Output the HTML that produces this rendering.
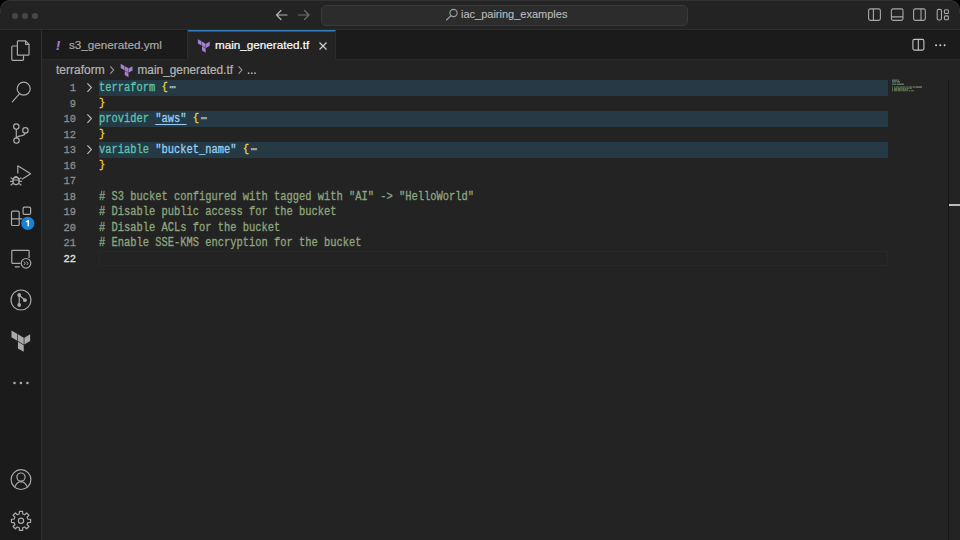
<!DOCTYPE html>
<html><head><meta charset="utf-8">
<style>
html,body{margin:0;padding:0;width:960px;height:540px;overflow:hidden;background:#000;}
body{position:relative;font-family:"Liberation Sans",sans-serif;}
.abs{position:absolute;}
#win{position:absolute;left:0;top:0;width:960px;height:540px;background:#232323;border-radius:10px 10px 0 0;overflow:hidden;}
#topb{position:absolute;left:0;top:0;width:958px;height:12px;border:1px solid #333333;border-bottom:none;border-radius:10px 10px 0 0;z-index:5;}
#title{position:absolute;left:0;top:0;width:960px;height:29px;background:#232323;border-bottom:1px solid #2e2e2e;}
#act{position:absolute;left:0;top:30px;width:41px;height:510px;background:#1b1b1b;border-right:1px solid #303030;}
#tabs{position:absolute;left:42px;top:30px;width:918px;height:29px;background:#1b1b1b;border-bottom:1px solid #2a2a2a;box-shadow:inset 0 1px 0 #171717;}
.tab{position:absolute;top:0;height:29px;font-size:11.7px;color:#a8a8a8;-webkit-text-stroke:0.2px currentColor;}
#code{position:absolute;left:42px;top:80px;width:918px;font-family:"Liberation Mono",monospace;font-size:10.42px;}
.ln{position:absolute;left:-66px;width:100px;text-align:right;color:#8c8c8c;font-size:11.6px;transform:translateY(0px) scaleX(0.898);transform-origin:100% 0;-webkit-text-stroke:0.3px currentColor;}
.tx{position:absolute;left:57px;white-space:pre;}
.hl{position:absolute;left:57px;width:789px;height:15.5px;background:#263a46;}
svg{position:absolute;overflow:visible;}
.ln,.tx{line-height:15.5px;height:15.5px;}
.tx{font-size:12px;transform:translateY(1px) scaleX(0.868);transform-origin:0 0;-webkit-text-stroke:0.3px currentColor;}
.k{color:#5dc3af;}
.s{color:#95d0f5;}
.u{text-decoration:underline;text-underline-offset:2px;}
.b{color:#f5d33a;display:inline-block;transform:translateY(-0.9px) scaleY(0.86);transform-origin:50% 62%;}
.c{color:#8ea67e;}
.el{color:#b8b8b8;margin-left:2px;}
.act{color:#e6e6e6;}
.cur{position:absolute;left:57px;width:787px;height:13px;border:1px solid #282828;}
</style></head><body>
<div id="win">
<div id="topb"></div>
  <div id="title">
    <div class="abs" style="left:12.2px;top:12.5px;width:6.2px;height:6.2px;border-radius:50%;background:#484848"></div>
    <div class="abs" style="left:22.2px;top:12.5px;width:6.2px;height:6.2px;border-radius:50%;background:#484848"></div>
    <div class="abs" style="left:32.2px;top:12.5px;width:6.2px;height:6.2px;border-radius:50%;background:#484848"></div>
    <svg style="left:0;top:0" width="960" height="30">
      <g fill="none" stroke="#b4b4b4" stroke-width="1.2" stroke-linecap="round" stroke-linejoin="round">
        <path d="M287 15H276.5M281 10.5L276.5 15L281 19.5"/>
      </g>
      <g fill="none" stroke="#707070" stroke-width="1.2" stroke-linecap="round" stroke-linejoin="round">
        <path d="M298.5 15H309M304.5 10.5L309 15L304.5 19.5"/>
      </g>
    </svg>
    <div class="abs" style="left:321px;top:4.5px;width:365px;height:19px;border-radius:5px;background:#2c2c2c;border:1px solid #3a3a3a;"></div>
    <svg style="left:0;top:0" width="960" height="30">
      <g fill="none" stroke="#a0a0a0" stroke-width="1.1" stroke-linecap="round">
        <circle cx="453.5" cy="13" r="3.6"/><path d="M451 15.6L446.5 20"/>
      </g>
    </svg>
    <div class="abs" style="left:461px;top:8px;font-size:11px;color:#b8b8b8;-webkit-text-stroke:0.15px currentColor;">iac_pairing_examples</div>
    <svg style="left:0;top:0" width="960" height="30">
      <g fill="none" stroke="#a8a8a8" stroke-width="1.1">
        <rect x="868.6" y="8.9" width="11.8" height="11.5" rx="1.8"/><path d="M873.4 9V20.4"/>
        <rect x="891.4" y="8.9" width="11.6" height="11.5" rx="1.8"/><path d="M891.5 16.9H903"/>
        <rect x="913.6" y="8.9" width="11.7" height="11.5" rx="1.8"/><path d="M921 9V20.4"/>
        <rect x="937.2" y="9.4" width="4.3" height="10.6" rx="1.5"/>
        <rect x="944.4" y="9.7" width="4" height="3.8" rx="1"/>
        <rect x="944.4" y="15.9" width="4" height="3.8" rx="1"/>
      </g>
    </svg>
  </div>

  <div id="act">
    <svg style="left:0;top:-30px" width="41" height="540">
      <g fill="none" stroke="#a9a9a9" stroke-width="1.2" stroke-linecap="round" stroke-linejoin="round">
        <!-- explorer -->
        <path d="M16.5 46H12.6Q11.8 46 11.8 47V59.6Q11.8 60.4 12.6 60.4H22.6Q23.5 60.4 23.5 59.6V55.7"/>
        <path d="M17.4 55.1V41.7Q17.4 40.9 18.2 40.9H25.6L29 44.3V54.2Q29 55.1 28.2 55.1H18.2Q17.4 55.1 17.4 54.2Z"/>
        <path d="M25.6 41V44.3H28.9"/>
        <!-- search -->
        <circle cx="23.7" cy="88.7" r="6.5"/><path d="M19.2 94.2L12.3 101.8"/>
        <!-- scm -->
        <circle cx="16.3" cy="126.6" r="2.7"/><circle cx="25.4" cy="130.4" r="2.7"/><circle cx="16.5" cy="140.6" r="2.7"/>
        <path d="M16.3 129.3V137.9M25.2 133.1Q24.5 135.6 21 135.8Q17 136.2 16.4 138.2"/>
        <!-- debug -->
        <path d="M17.8 173V165.8L30.6 173.8L22.3 179"/>
        <ellipse cx="16" cy="181" rx="3.1" ry="3.6"/><path d="M13 180H19M11 178L12.9 179M21 178L19.1 179M10.6 181.4H12.9M21.4 181.4H19.1M11 185L13 183.4M21 185L19 183.4M14 177.8Q16 175.6 18 177.8"/>
        <!-- extensions -->
        <rect x="11.5" y="211.1" width="7.7" height="14.4" rx="1.3"/><path d="M11.5 218.9H22"/>
        <rect x="23.1" y="207.1" width="7.5" height="7.3" rx="1.2"/>
        <!-- remote -->
        <path d="M20 263.4H12.4Q11.8 263.4 11.8 262.6V251Q11.8 250.3 12.4 250.3H28.4Q29.1 250.3 29.1 251V257.5"/>
        <path d="M15.2 266.8H19.3"/>
        <circle cx="26" cy="263.3" r="4.8"/>
        <!-- gitlens -->
        <circle cx="21" cy="300" r="10"/>
        <path d="M19.2 295V305M19.2 295L24.9 300.2"/>
        <!-- account -->
        <circle cx="21" cy="479.6" r="9.9"/><circle cx="21" cy="477.1" r="4.1"/>
        <path d="M14.8 486.8Q17 481.8 21 481.6Q25 481.8 27.3 486.8"/>
        <!-- gear -->
        <circle cx="21" cy="520.8" r="2.6"/><path d="M19.28 513.96L19.40 511.28L22.60 511.28L22.72 513.96L24.66 514.76L26.63 512.95L28.90 515.22L27.09 517.19L27.89 519.13L30.57 519.25L30.57 522.45L27.89 522.57L27.09 524.51L28.90 526.48L26.63 528.75L24.66 526.94L22.72 527.74L22.60 530.42L19.40 530.42L19.28 527.74L17.34 526.94L15.37 528.75L13.10 526.48L14.91 524.51L14.11 522.57L11.43 522.45L11.43 519.25L14.11 519.13L14.91 517.19L13.10 515.22L15.37 512.95L17.34 514.76Z"/>
      </g>
      <g fill="#a9a9a9">
        <path d="M23.9 261.6L25.3 263.1L24 265M26.6 261.6L28 263.4L26.8 265" stroke="#a9a9a9" stroke-width="1" fill="none"/>
        <circle cx="19.2" cy="295" r="1.9"/><circle cx="19.2" cy="305" r="1.9"/><circle cx="24.9" cy="300.2" r="1.9"/>
        <g transform="translate(10.2,330.6) scale(0.885)"><path d="M1.44 0v7.575l6.561 3.79V3.787zm21.12 4.227l-6.561 3.791v7.574l6.56-3.787zM8.72 4.23v7.575l6.561 3.787V8.018zm0 8.405v7.575L15.28 24v-7.578z"/></g>
        <circle cx="14.5" cy="383" r="1.3"/><circle cx="20.9" cy="383" r="1.3"/><circle cx="27.4" cy="383" r="1.3"/>
      </g>
      <circle cx="27.8" cy="223.4" r="6.6" fill="#1683d8"/>
      <path d="M28.3 226.3V220.6L26.2 222" stroke="#fff" stroke-width="1.5" fill="none" stroke-linejoin="round"/>
    </svg>
  </div>

  <div id="tabs">
    <div class="tab" style="left:0;width:145px;background:#1b1b1b;border-right:1px solid #2c2c2c;box-shadow:inset 0 1px 0 #171717;">
      <div class="abs" style="left:14px;top:7.5px;font-size:13px;font-weight:bold;transform:skewX(-10deg);color:#a37fd2;">!</div>
      <div class="abs" style="left:27px;top:7.5px;">s3_generated.yml</div>
    </div>
    <div class="tab" style="left:146px;width:147px;background:#232323;border-top:1px solid #3479bb;height:29px;border-right:1px solid #2c2c2c;box-shadow:inset 0 1px 0 #245283;">
      <svg style="left:10px;top:8px" width="14" height="13"><g fill="#a37fd2" transform="translate(-0.9,0.2) scale(0.56)"><path d="M1.44 0v7.575l6.561 3.79V3.787zm21.12 4.227l-6.561 3.791v7.574l6.56-3.787zM8.72 4.23v7.575l6.561 3.787V8.018zm0 8.405v7.575L15.28 24v-7.578z"/></g></svg>
      <div class="abs" style="left:27px;top:6.7px;color:#ffffff;">main_generated.tf</div>
      <svg style="left:0;top:-1px" width="147" height="30"><path d="M277.5 12.5L284.5 19.5M284.5 12.5L277.5 19.5" transform="translate(-146,0)" stroke="#d0d0d0" stroke-width="1.2" fill="none"/></svg>
    </div>
    <svg style="left:-42px;top:-30px" width="960" height="60">
      <g fill="none" stroke="#c4c4c4" stroke-width="1.1">
        <rect x="912.9" y="39.4" width="11" height="10.7" rx="1.6"/><path d="M918.3 39.5V50"/>
      </g>
      <g fill="#d8d8d8"><circle cx="936.1" cy="45.3" r="0.95"/><circle cx="940.3" cy="45.3" r="0.95"/><circle cx="944.6" cy="45.3" r="0.95"/></g>
    </svg>
  </div>

  <!-- breadcrumbs -->
  <div class="abs" style="left:56px;top:63px;font-size:12px;color:#b4b4b4;-webkit-text-stroke:0.2px currentColor;">terraform</div>
  <svg style="left:0;top:60px" width="300" height="20">
    <path d="M110.3 6.3L113.6 10L110.3 13.7M238.6 6.3L241.9 10L238.6 13.7" stroke="#a0a0a0" stroke-width="1.1" fill="none"/>
    <g fill="#a37fd2" transform="translate(119.9,3.8) scale(0.56)"><path d="M1.44 0v7.575l6.561 3.79V3.787zm21.12 4.227l-6.561 3.791v7.574l6.56-3.787zM8.72 4.23v7.575l6.561 3.787V8.018zm0 8.405v7.575L15.28 24v-7.578z"/></g>
  </svg>
  <div class="abs" style="left:137.5px;top:63px;font-size:11.85px;color:#b4b4b4;-webkit-text-stroke:0.2px currentColor;">main_generated.tf</div>
  <svg style="left:0;top:60px" width="300" height="20"><g fill="#b4b4b4"><circle cx="248.6" cy="13.2" r="0.85"/><circle cx="251.8" cy="13.2" r="0.85"/><circle cx="255" cy="13.2" r="0.85"/></g></svg>


  <div class="abs" style="left:948px;top:80px;width:1px;height:460px;background:#161616;"></div>
  <div class="abs" style="left:949px;top:203.5px;width:11px;height:2px;background:#bcbcbc;"></div>
  <svg style="left:0;top:0" width="960" height="540">
    <g opacity="0.8">
    <rect x="892" y="79.6" width="5.5" height="1.1" fill="#6f9c92"/><rect x="898" y="79.6" width="1" height="1.1" fill="#a09a50"/>
    <rect x="892" y="81.3" width="4.5" height="1.1" fill="#6f9c92"/><rect x="897" y="81.3" width="3" height="1.1" fill="#7fa3bd"/>
    <rect x="892" y="83.6" width="4.5" height="1.1" fill="#6f9c92"/><rect x="897" y="83.6" width="7" height="1.1" fill="#8aa6b8"/>
    <rect x="892" y="86.5" width="1" height="1.1" fill="#6a8a58"/><rect x="894" y="86.5" width="1.3" height="1.1" fill="#6a8a58"/><rect x="896" y="86.5" width="3.5" height="1.1" fill="#6a8a58"/><rect x="900" y="86.5" width="5.5" height="1.1" fill="#6a8a58"/><rect x="906" y="86.5" width="2.5" height="1.1" fill="#6a8a58"/><rect x="909" y="86.5" width="3.5" height="1.1" fill="#7a9a66"/><rect x="913" y="86.5" width="2" height="1.1" fill="#8a9a80"/><rect x="915.5" y="86.5" width="6.5" height="1.1" fill="#a8b0a0"/>
    <rect x="892" y="87.8" width="1" height="1.1" fill="#6a8a58"/><rect x="894" y="87.8" width="3.5" height="1.1" fill="#6a8a58"/><rect x="898" y="87.8" width="3" height="1.1" fill="#6a8a58"/><rect x="901.5" y="87.8" width="3" height="1.1" fill="#6a8a58"/><rect x="905" y="87.8" width="1.5" height="1.1" fill="#6a8a58"/><rect x="907" y="87.8" width="2" height="1.1" fill="#6a8a58"/><rect x="909.5" y="87.8" width="2.5" height="1.1" fill="#6a8a58"/>
    <rect x="892" y="89" width="1" height="1.1" fill="#6a8a58"/><rect x="894" y="89" width="3.5" height="1.1" fill="#6a8a58"/><rect x="898" y="89" width="2" height="1.1" fill="#6a8a58"/><rect x="900.5" y="89" width="1.5" height="1.1" fill="#6a8a58"/><rect x="902.5" y="89" width="1.5" height="1.1" fill="#6a8a58"/><rect x="904.5" y="89" width="3" height="1.1" fill="#6a8a58"/>
    <rect x="892" y="90.2" width="1" height="1.1" fill="#6a8a58"/><rect x="894" y="90.2" width="3" height="1.1" fill="#6a8a58"/><rect x="897.5" y="90.2" width="3.5" height="1.1" fill="#6a8a58"/><rect x="901.5" y="90.2" width="5" height="1.1" fill="#6a8a58"/><rect x="907" y="90.2" width="1.5" height="1.1" fill="#6a8a58"/><rect x="909" y="90.2" width="1.5" height="1.1" fill="#6a8a58"/><rect x="911" y="90.2" width="3" height="1.1" fill="#6a8a58"/>
    </g>
  </svg>
  <div id="code">
<div class="hl" style="top:0.0px"></div>
<div class="ln" style="top:0.0px">1</div>
<svg style="left:44px;top:0.0px" width="8" height="15"><path d="M1.4 3.3L5.4 7.6L1.4 11.9" stroke="#bcbcbc" stroke-width="1.15" fill="none"/></svg>
<div class="tx" style="top:0.0px"><span class="k">terraform</span> <span class="b">{</span><span class="el">⋯</span></div>
<div class="ln" style="top:15.54px">9</div>
<div class="tx" style="top:15.54px"><span class="b">}</span></div>
<div class="hl" style="top:31.09px"></div>
<div class="ln" style="top:31.09px">10</div>
<svg style="left:44px;top:31.09px" width="8" height="15"><path d="M1.4 3.3L5.4 7.6L1.4 11.9" stroke="#bcbcbc" stroke-width="1.15" fill="none"/></svg>
<div class="tx" style="top:31.09px"><span class="k">provider</span> <span class="s u">"aws"</span> <span class="b">{</span><span class="el">⋯</span></div>
<div class="ln" style="top:46.63px">12</div>
<div class="tx" style="top:46.63px"><span class="b">}</span></div>
<div class="hl" style="top:62.18px"></div>
<div class="ln" style="top:62.18px">13</div>
<svg style="left:44px;top:62.18px" width="8" height="15"><path d="M1.4 3.3L5.4 7.6L1.4 11.9" stroke="#bcbcbc" stroke-width="1.15" fill="none"/></svg>
<div class="tx" style="top:62.18px"><span class="k">variable</span> <span class="s">"bucket_name"</span> <span class="b">{</span><span class="el">⋯</span></div>
<div class="ln" style="top:77.72px">16</div>
<div class="tx" style="top:77.72px"><span class="b">}</span></div>
<div class="ln" style="top:93.27px">17</div>
<div class="ln" style="top:108.81px">18</div>
<div class="tx" style="top:108.81px"><span class="c"># S3 bucket configured with tagged with "AI" -&gt; "HelloWorld"</span></div>
<div class="ln" style="top:124.36px">19</div>
<div class="tx" style="top:124.36px"><span class="c"># Disable public access for the bucket</span></div>
<div class="ln" style="top:139.91px">20</div>
<div class="tx" style="top:139.91px"><span class="c"># Disable ACLs for the bucket</span></div>
<div class="ln" style="top:155.45px">21</div>
<div class="tx" style="top:155.45px"><span class="c"># Enable SSE-KMS encryption for the bucket</span></div>
<div class="cur" style="top:171.0px"></div>
<div class="ln act" style="top:171.0px">22</div>
</div>
</div>
</body></html>
